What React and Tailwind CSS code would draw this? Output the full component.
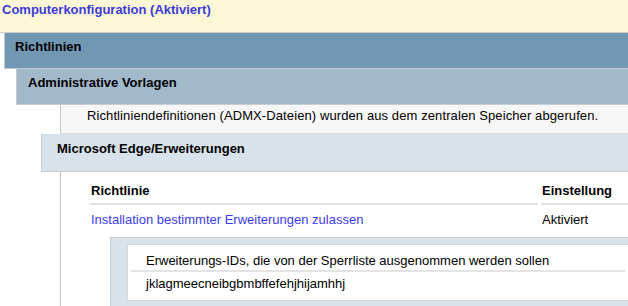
export default function App() {
  return (
    <div className="w-[628px] h-[306px] overflow-hidden bg-white font-['Liberation_Sans',Arial,sans-serif] text-[13px] leading-[16px] text-black">
      <div className="h-[33px] bg-[#fcf7d6] border-b border-[#cfcfcf] pl-[2px] pt-[2px] font-bold text-[#3d3bd6]">
        Computerkonfiguration (Aktiviert)
      </div>
      <div className="ml-[4px]">
        <div className="h-[36px] bg-[#7297b2] border-l border-b border-[#c3ccd4] pl-[10px] pt-[6px] font-bold">
          Richtlinien
        </div>
        <div className="ml-[12px]">
          <div className="h-[36px] bg-[#a2b8cb] border-l border-b border-[#c8cdd2] pl-[11px] pt-[6px] font-bold">
            Administrative Vorlagen
          </div>
          <div className="ml-[44px] border-l border-[#c8c8c8]">
            <div className="h-[29px] bg-[#f7f7f7] border-b border-[#dedede] pl-[26px] pt-[3px] tracking-[0.1px]">
              Richtliniendefinitionen (ADMX-Dateien) wurden aus dem zentralen Speicher abgerufen.
            </div>
          </div>
          <div className="ml-[25px]">
            <div className="h-[38px] bg-[#d8e2ea] border-l border-b border-[#c8cdd2] pl-[15px] pt-[7px] font-bold">
              Microsoft Edge/Erweiterungen
            </div>
            <div className="ml-[19px] border-l border-[#c8c8c8] h-[200px] pl-[29px]">
              <div className="flex h-[33px] gap-[3px] font-bold">
                <div className="w-[448px] border-b-2 border-[#e2e2e2] pl-[1px] pt-[11px]">Richtlinie</div>
                <div className="flex-1 border-b-2 border-[#e2e2e2] pl-[1px] pt-[11px]">Einstellung</div>
              </div>
              <div className="flex h-[30px] gap-[3px]">
                <div className="w-[448px] pl-[1px] pt-[7px] text-[#3c3cf0]">Installation bestimmter Erweiterungen zulassen</div>
                <div className="flex-1 pl-[1px] pt-[7px]">Aktiviert</div>
              </div>
              <div className="ml-[20px] mt-[2px] bg-[#d8e2ea] border-t border-l border-[#c8cdd2] pl-[16px] pt-[6px] pb-[6px]">
                <div className="bg-white border-l border-y border-[#d8d8d8]">
                  <div className="h-[27px] pl-[15px] pt-[8px] mx-[3px] border-b-2 border-[#e4e4e4]">
                    Erweiterungs-IDs, die von der Sperrliste ausgenommen werden sollen
                  </div>
                  <div className="h-[28px] pl-[18px] pt-[4px]">
                    jklagmeecneibgbmbffefehjhijamhhj
                  </div>
                </div>
              </div>
            </div>
          </div>
        </div>
      </div>
    </div>
  );
}
